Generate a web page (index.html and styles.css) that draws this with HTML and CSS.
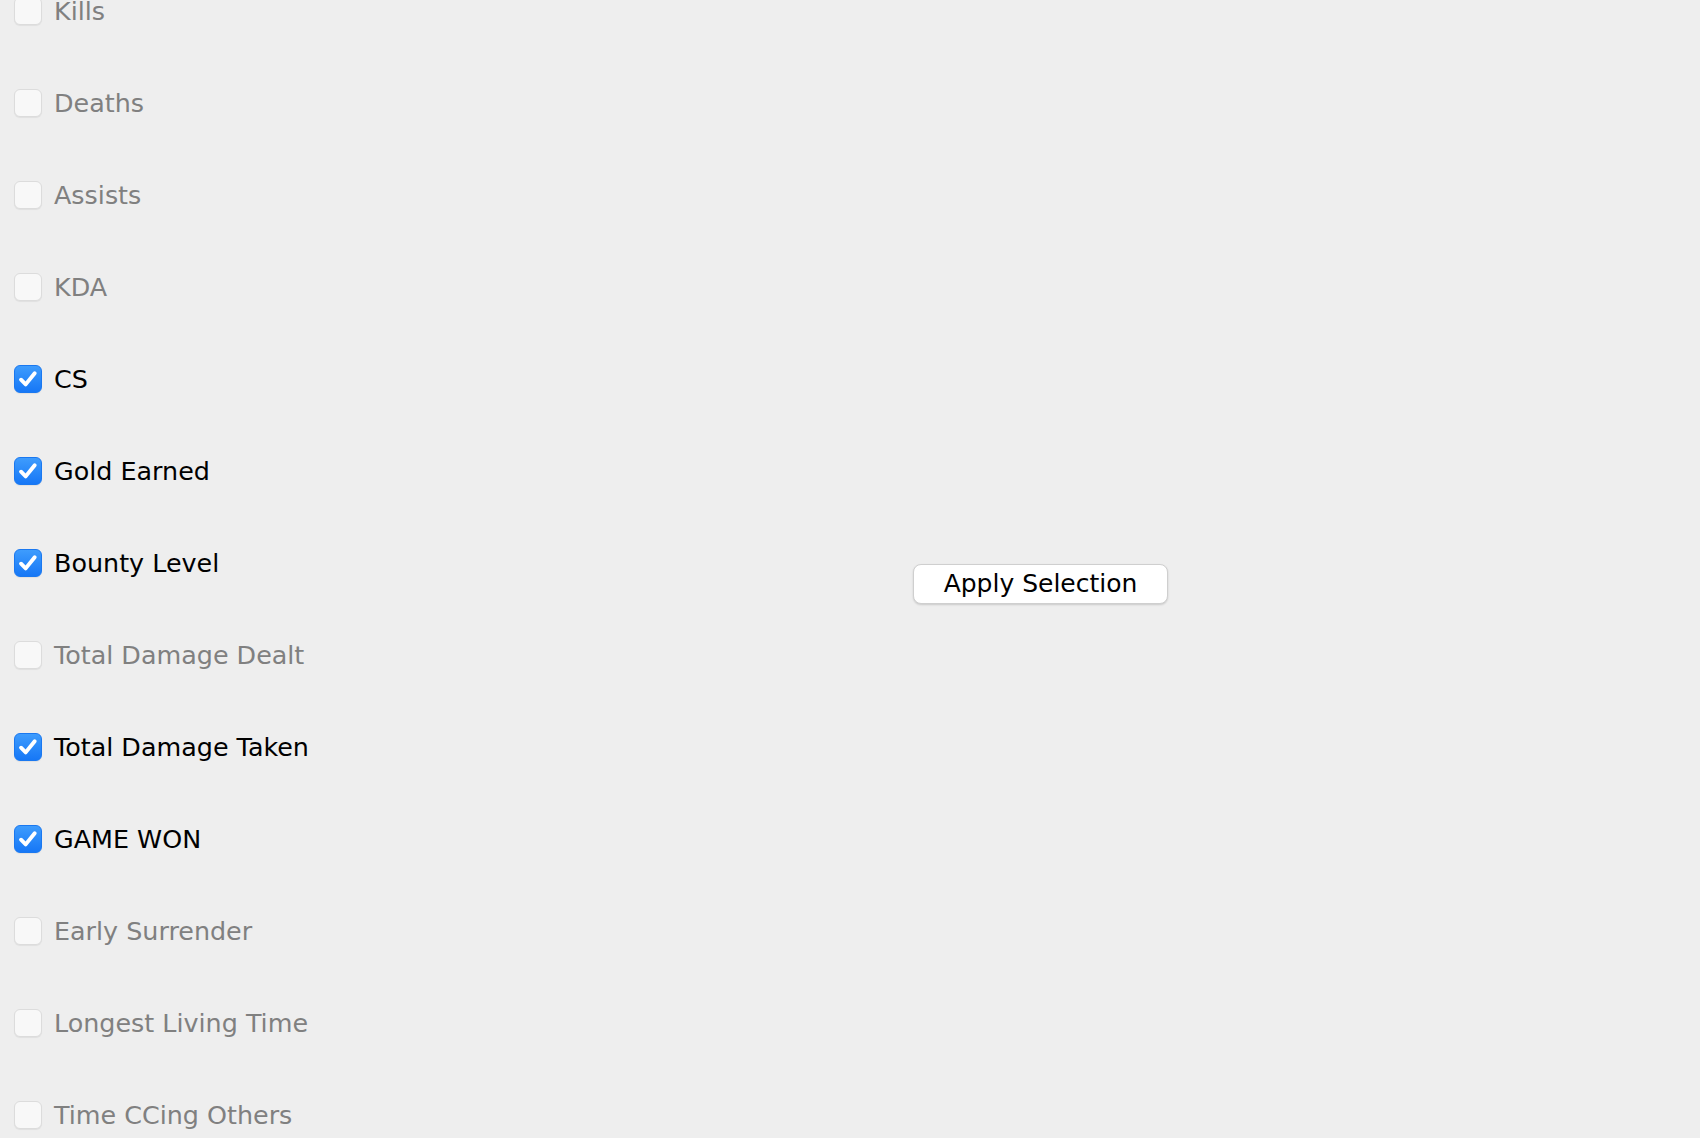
FILE: index.html
```html
<!DOCTYPE html>
<html>
<head>
<meta charset="utf-8">
<link rel="stylesheet" href="styles.css">
</head>
<body>
<div class="page">
  <ul class="options">
    <li class="opt"><span class="box"></span><span class="label">Kills</span></li>
    <li class="opt"><span class="box"></span><span class="label">Deaths</span></li>
    <li class="opt"><span class="box"></span><span class="label">Assists</span></li>
    <li class="opt"><span class="box"></span><span class="label">KDA</span></li>
    <li class="opt on"><span class="box"><svg viewBox="0 0 28 28"><path d="M6.5 14.8 L11.5 19.8 L21.2 7.8"/></svg></span><span class="label">CS</span></li>
    <li class="opt on"><span class="box"><svg viewBox="0 0 28 28"><path d="M6.5 14.8 L11.5 19.8 L21.2 7.8"/></svg></span><span class="label">Gold Earned</span></li>
    <li class="opt on"><span class="box"><svg viewBox="0 0 28 28"><path d="M6.5 14.8 L11.5 19.8 L21.2 7.8"/></svg></span><span class="label">Bounty Level</span></li>
    <li class="opt"><span class="box"></span><span class="label">Total Damage Dealt</span></li>
    <li class="opt on"><span class="box"><svg viewBox="0 0 28 28"><path d="M6.5 14.8 L11.5 19.8 L21.2 7.8"/></svg></span><span class="label">Total Damage Taken</span></li>
    <li class="opt on"><span class="box"><svg viewBox="0 0 28 28"><path d="M6.5 14.8 L11.5 19.8 L21.2 7.8"/></svg></span><span class="label">GAME WON</span></li>
    <li class="opt"><span class="box"></span><span class="label">Early Surrender</span></li>
    <li class="opt"><span class="box"></span><span class="label">Longest Living Time</span></li>
    <li class="opt"><span class="box"></span><span class="label">Time CCing Others</span></li>
  </ul>
  <div class="actions">
    <button class="apply">Apply Selection</button>
  </div>
</div>
</body>
</html>
```

FILE: styles.css
```css
html, body {
  margin: 0;
  padding: 0;
  background: #eeeeee;
  height: 100%;
  overflow: hidden;
}
body {
  font-family: "DejaVu Sans", "Liberation Sans", sans-serif;
}
.page {
  display: flex;
  height: 1138px;
}
.options {
  list-style: none;
  margin: -35px 0 0 0;
  padding: 0 0 0 14px;
  width: 306px;
  flex: none;
}
.opt {
  height: 92px;
  display: flex;
  align-items: center;
  gap: 12px;
}
.box {
  width: 26px;
  height: 26px;
  border-radius: 6px;
  background: #f8f8f8;
  border: 1px solid #dcdcdc;
  box-shadow: 0 1px 1px rgba(0,0,0,0.06);
  display: flex;
  align-items: center;
  justify-content: center;
  flex: none;
}
.opt.on .box {
  background: linear-gradient(#3e9cfd, #1677f6);
  border-color: #1a78f0;
}
.box svg {
  width: 26px;
  height: 26px;
}
.box svg path {
  fill: none;
  stroke: #ffffff;
  stroke-width: 4.2;
  stroke-linecap: round;
  stroke-linejoin: round;
}
.label {
  font-size: 25.4px;
  color: #808080;
  white-space: nowrap;
}
.opt.on .label {
  color: #000000;
}
.actions {
  padding: 564px 0 0 593px;
}
.apply {
  width: 255px;
  height: 40px;
  background: #ffffff;
  border: 1px solid #cfcfcf;
  border-radius: 8px;
  box-shadow: 0 1px 2px rgba(0,0,0,0.15);
  font-family: "DejaVu Sans", "Liberation Sans", sans-serif;
  font-size: 25px;
  color: #000000;
  padding: 0;
  line-height: 38px;
}
```
